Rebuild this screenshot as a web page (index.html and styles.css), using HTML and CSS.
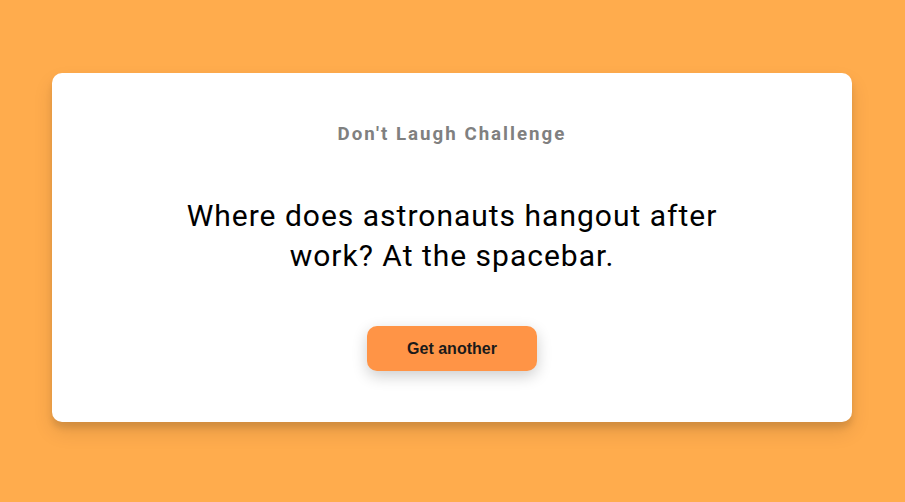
FILE: index.html
```html
<!DOCTYPE html>
<html>
<head>
<meta charset="utf-8">
<link rel="stylesheet" href="styles.css">
</head>
<body>
<div class="container">
  <h3 class="title">Don't Laugh Challenge</h3>
  <div class="joke">Where does astronauts hangout after work? At the spacebar.</div>
  <button class="btn">Get another</button>
</div>
</body>
</html>
```
FILE: styles.css
```css
* { box-sizing: border-box; }
html, body { margin: 0; padding: 0; }
body {
  background: #ffac4d;
  font-family: Roboto, "Liberation Sans", sans-serif;
  height: 100vh;
  padding: 73px 0 0 52px;
  overflow: hidden;
}
.container {
  background: #fff;
  border-radius: 10px;
  box-shadow: 0 10px 20px rgba(0,0,0,0.1), 0 6px 6px rgba(0,0,0,0.1);
  padding: 50px 20px 51px;
  text-align: center;
  width: 800px;
}
.title {
  margin: 0;
  font-size: 18.72px;
  font-weight: 700;
  color: #808080;
  letter-spacing: 2px;
  line-height: 22px;
}
.joke {
  font-size: 30px;
  line-height: 40px;
  letter-spacing: 1px;
  margin: 51px auto 50px;
  max-width: 600px;
  color: #000;
}
.btn {
  background: #ff9446;
  color: #1a1a1a;
  border: 0;
  border-radius: 10px;
  box-shadow: 0 5px 15px rgba(0,0,0,0.2);
  padding: 14px 20px;
  font-family: "Liberation Sans", Arial, sans-serif;
  font-size: 16px;
  font-weight: 700;
  line-height: 17px;
  width: 170px;
}
```
